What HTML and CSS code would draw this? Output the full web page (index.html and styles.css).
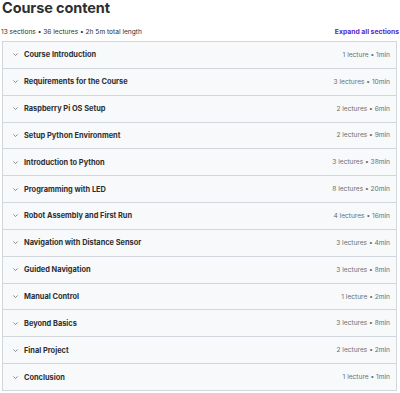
FILE: index.html
```html
<!DOCTYPE html>
<html>
<head>
<meta charset="utf-8">
<link rel="stylesheet" href="styles.css">
</head>
<body>
<div class="page">
  <h2 class="title">Course content</h2>
  <div class="meta">
    <span class="stats">13 sections • 36 lectures • 2h 5m total length</span>
    <span class="expand">Expand all sections</span>
  </div>
  <div class="sections">
    <div class="row"><span class="left"><svg class="chev" viewBox="0 0 10 10"><path d="M2 3.5 L5 6.5 L8 3.5" fill="none" stroke="#6a6f73" stroke-width="1.1"/></svg><span class="name">Course Introduction</span></span><span class="info">1 lecture • 1min</span></div>
    <div class="row"><span class="left"><svg class="chev" viewBox="0 0 10 10"><path d="M2 3.5 L5 6.5 L8 3.5" fill="none" stroke="#6a6f73" stroke-width="1.1"/></svg><span class="name">Requirements for the Course</span></span><span class="info">3 lectures • 10min</span></div>
    <div class="row"><span class="left"><svg class="chev" viewBox="0 0 10 10"><path d="M2 3.5 L5 6.5 L8 3.5" fill="none" stroke="#6a6f73" stroke-width="1.1"/></svg><span class="name">Raspberry Pi OS Setup</span></span><span class="info">2 lectures • 6min</span></div>
    <div class="row"><span class="left"><svg class="chev" viewBox="0 0 10 10"><path d="M2 3.5 L5 6.5 L8 3.5" fill="none" stroke="#6a6f73" stroke-width="1.1"/></svg><span class="name">Setup Python Environment</span></span><span class="info">2 lectures • 9min</span></div>
    <div class="row"><span class="left"><svg class="chev" viewBox="0 0 10 10"><path d="M2 3.5 L5 6.5 L8 3.5" fill="none" stroke="#6a6f73" stroke-width="1.1"/></svg><span class="name">Introduction to Python</span></span><span class="info">3 lectures • 38min</span></div>
    <div class="row"><span class="left"><svg class="chev" viewBox="0 0 10 10"><path d="M2 3.5 L5 6.5 L8 3.5" fill="none" stroke="#6a6f73" stroke-width="1.1"/></svg><span class="name">Programming with LED</span></span><span class="info">8 lectures • 20min</span></div>
    <div class="row"><span class="left"><svg class="chev" viewBox="0 0 10 10"><path d="M2 3.5 L5 6.5 L8 3.5" fill="none" stroke="#6a6f73" stroke-width="1.1"/></svg><span class="name">Robot Assembly and First Run</span></span><span class="info">4 lectures • 16min</span></div>
    <div class="row"><span class="left"><svg class="chev" viewBox="0 0 10 10"><path d="M2 3.5 L5 6.5 L8 3.5" fill="none" stroke="#6a6f73" stroke-width="1.1"/></svg><span class="name">Navigation with Distance Sensor</span></span><span class="info">3 lectures • 4min</span></div>
    <div class="row"><span class="left"><svg class="chev" viewBox="0 0 10 10"><path d="M2 3.5 L5 6.5 L8 3.5" fill="none" stroke="#6a6f73" stroke-width="1.1"/></svg><span class="name">Guided Navigation</span></span><span class="info">3 lectures • 8min</span></div>
    <div class="row"><span class="left"><svg class="chev" viewBox="0 0 10 10"><path d="M2 3.5 L5 6.5 L8 3.5" fill="none" stroke="#6a6f73" stroke-width="1.1"/></svg><span class="name">Manual Control</span></span><span class="info">1 lecture • 2min</span></div>
    <div class="row"><span class="left"><svg class="chev" viewBox="0 0 10 10"><path d="M2 3.5 L5 6.5 L8 3.5" fill="none" stroke="#6a6f73" stroke-width="1.1"/></svg><span class="name">Beyond Basics</span></span><span class="info">3 lectures • 8min</span></div>
    <div class="row"><span class="left"><svg class="chev" viewBox="0 0 10 10"><path d="M2 3.5 L5 6.5 L8 3.5" fill="none" stroke="#6a6f73" stroke-width="1.1"/></svg><span class="name">Final Project</span></span><span class="info">2 lectures • 2min</span></div>
    <div class="row"><span class="left"><svg class="chev" viewBox="0 0 10 10"><path d="M2 3.5 L5 6.5 L8 3.5" fill="none" stroke="#6a6f73" stroke-width="1.1"/></svg><span class="name">Conclusion</span></span><span class="info">1 lecture • 1min</span></div>
  </div>
</div>
</body>
</html>
```

FILE: styles.css
```css
* { box-sizing: border-box; }
html, body { margin: 0; padding: 0; background: #fff; }
body {
  font-family: Inter, "Noto Sans", Roboto, sans-serif;
  color: #2d2f31;
}
.page {
  padding: 0 3px 0 2px;
}
.title {
  margin: 0;
  font-size: 14.5px;
  font-weight: 700;
  line-height: 16px;
  letter-spacing: -0.1px;
}
.meta {
  display: flex;
  justify-content: space-between;
  align-items: center;
  margin-top: 10px;
  height: 15px;
  padding-bottom: 4px;
}
.stats {
  font-size: 6.6px;
  color: #2d2f31;
  margin-left: -1px;
}
.expand {
  font-size: 6.8px;
  font-weight: 700;
  color: #5624d0;
  margin-right: -2px;
}
.sections {
  border: 1px solid #d1d7dc;
  border-bottom: none;
}
.row {
  display: flex;
  justify-content: space-between;
  align-items: center;
  height: 26.85px;
  background: #f7f9fa;
  border-bottom: 1px solid #d1d7dc;
  padding: 0 6px 0 9px;
}
.left {
  display: flex;
  align-items: center;
}
.chev {
  width: 7px;
  height: 7px;
  margin-right: 5px;
}
.name {
  font-size: 7.4px;
  font-weight: 700;
  color: #2d2f31;
}
.info {
  font-size: 6.6px;
  color: #6a6f73;
}
```
